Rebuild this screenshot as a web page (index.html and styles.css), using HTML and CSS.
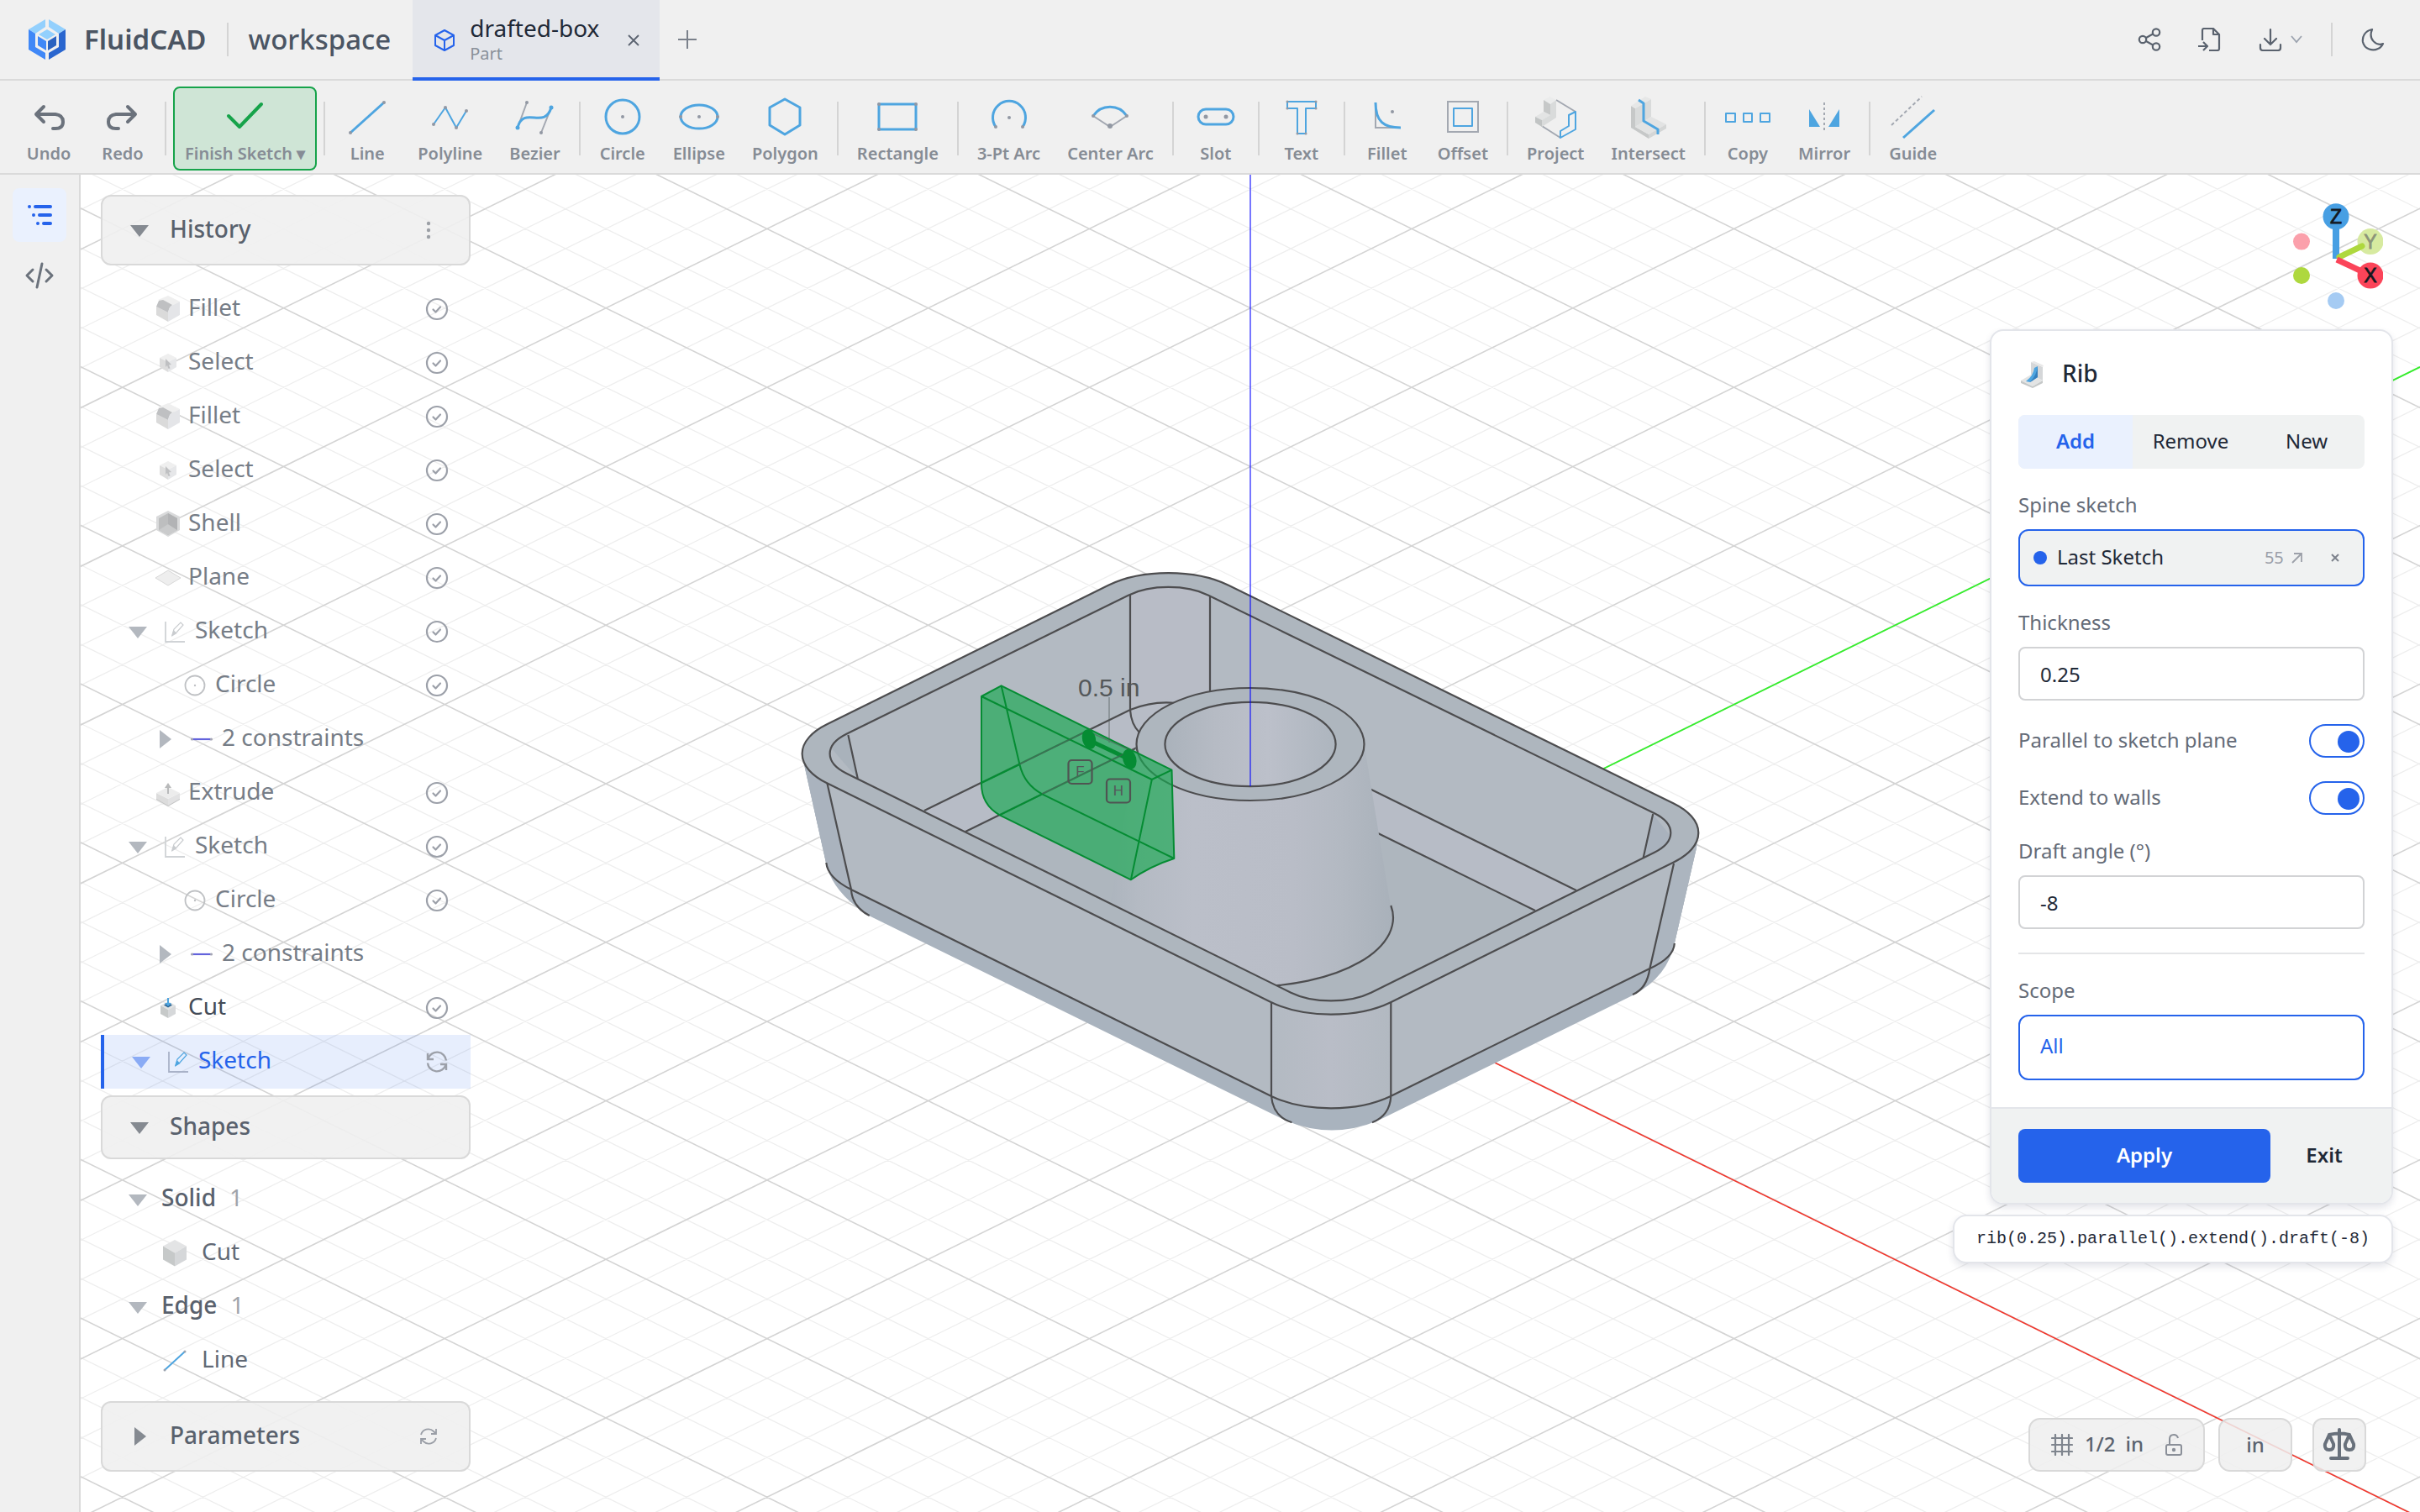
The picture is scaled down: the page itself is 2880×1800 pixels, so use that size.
FILE: index.html
```html
<!DOCTYPE html>
<html lang="en">
<head>
<meta charset="utf-8">
<title>FluidCAD – drafted-box</title>
<link rel="stylesheet" href="styles.css">
</head>
<body>
<svg class="defs" aria-hidden="true">
  <symbol id="i-check" viewBox="0 0 28 28"><circle cx="14" cy="14" r="12" fill="none" stroke="#9ca0a9" stroke-width="2.2"/><path d="M9.500 14.500l3 3 5.500-6" fill="none" stroke="#9ca0a9" stroke-width="2.2" stroke-linecap="round" stroke-linejoin="round"/></symbol>
  <symbol id="i-down" viewBox="0 0 24 24"><path d="M1 6h22L12 20z" fill="currentColor"/></symbol>
  <symbol id="i-right" viewBox="0 0 24 24"><path d="M6 1v22L20 12z" fill="currentColor"/></symbol>
  <symbol id="i-fillet" viewBox="0 0 32 32"><path d="M16 0l14 7-12 6L4 5z" fill="#efefef"/><path d="M2 13v10l14 8V20z" fill="#dadada"/><path d="M2 13l3-7 5-1 11 6-3 3-2 6z" fill="#bfc0c2"/><path d="M16 31V20q1-7 6-9l8-4v16z" fill="#e4e5e8"/></symbol>
  <symbol id="i-select" viewBox="0 0 32 32"><path d="M16 5l10 5-10 5-10-5z" fill="#efefef"/><path d="M6 10v11l10 6V15z" fill="#dddddd"/><path d="M26 10v11l-10 6V15z" fill="#e6e7e9"/><path d="M13 11l7 7-3 .5 1.500 4-2 .5-1.500-4-2 2z" fill="#bfc0c2"/></symbol>
  <symbol id="i-shell" viewBox="0 0 32 32"><path d="M16 0l14 7v16l-14 8-14-8V7z" fill="#d9dadb"/><path d="M16 3l11 6v14l-11 6-11-6V9z" fill="#bdbebf"/><path d="M16 16l11 7-11 6-11-6z" fill="#cacbcc"/><path d="M16 3l11 6v14l-11-7z" fill="#b2b3b5"/></symbol>
  <symbol id="i-plane" viewBox="0 0 32 32"><path d="M16 7l15 9-15 9L1 16z" fill="#eeeeee" stroke="#d8d8d8"/></symbol>
  <symbol id="i-sketch" viewBox="0 0 32 32"><path d="M5 4v24h23" fill="none" stroke="var(--axis,#d0d3d6)" stroke-width="1.800"/><path d="M13 20l2-7 8-8 3 3-8 9z" fill="none" stroke="var(--pen,#c9cccf)" stroke-width="1.200"/><path d="M12 22l2.500-8 4 4z" fill="var(--pen,#c9cccf)"/></symbol>
  <symbol id="i-circle" viewBox="0 0 32 32"><circle cx="16" cy="16" r="11.500" fill="none" stroke="#bfc1c4" stroke-width="1.800"/><circle cx="16" cy="16" r="1.200" fill="#bfc1c4"/></symbol>
  <symbol id="i-constraint" viewBox="0 0 32 32"><path d="M5 16h22" stroke="#6363dc" stroke-width="2.200"/><circle cx="4.500" cy="16" r="1.600" fill="#a3a4b4"/><circle cx="27.500" cy="16" r="1.600" fill="#a3a4b4"/></symbol>
  <symbol id="i-extrude" viewBox="0 0 32 32"><path d="M2 21l14 8 14-8v3l-14 8-14-8z" fill="#bfc0c0"/><path d="M2 16l14 7v8L2 23z" fill="#dcdcdc"/><path d="M30 16l-14 7v8l14-8z" fill="#e2e2e3"/><path d="M16 9l14 7-14 7-14-7z" fill="#ececec"/><path d="M16 4l-4 6h3v7h2v-7h3z" fill="#b9babb"/></symbol>
  <symbol id="i-cut" viewBox="0 0 32 32"><path d="M16 8l9 5-9 5-9-5z" fill="#e0e2e2"/><path d="M7 13v10l9 5V18z" fill="#c6c9c9"/><path d="M25 13v10l-9 5V18z" fill="#d6d8da"/><path d="M11 12.500l5-3 5 3-5 3z" fill="#2c6595"/><path d="M15 4h2v6h3l-4 4-4-4h3z" fill="#4ea5e0"/></symbol>
  <symbol id="i-cube" viewBox="0 0 32 32"><path d="M16 0l14 7.500-14 8L2 7.500z" fill="#e3e4e5"/><path d="M2 7.500v16l14 8v-16z" fill="#c6c9c9"/><path d="M30 7.500v16l-14 8v-16z" fill="#d5d7d9"/></symbol>
  <symbol id="i-line" viewBox="0 0 32 32"><path d="M4 27L28 5" stroke="#4ea5e0" stroke-width="2"/><circle cx="4" cy="27" r="1.500" fill="#9ca3af"/><circle cx="28" cy="5" r="1.500" fill="#9ca3af"/></symbol>
  <symbol id="i-sync" viewBox="0 0 28 28"><path d="M3 4v7h7M25 24v-7h-7M3.500 10.500a11 11 0 0 1 21.500 2M24.500 17.500a11 11 0 0 1-21.500-2" fill="none" stroke="currentColor" stroke-width="2.400"/></symbol>
  <symbol id="i-refresh" viewBox="0 0 24 24"><path d="M21 3v6h-6M3 21v-6h6M3 10a9 9 0 0 1 15-4l3 3M21 14a9 9 0 0 1-15 4l-3-3" fill="none" stroke="currentColor" stroke-width="1.800"/></symbol>
</svg>

<div class="app">
  <header class="topbar">
    <svg class="logo" viewBox="0 0 44 48"><path d="M20 0v9L8 17l-8-5z" fill="#93d0fd"/><path d="M24 0v9l12 8 8-5z" fill="#93d0fd"/><path d="M0 12l8 5v16l12 7v8L0 36z" fill="#4088f7"/><path d="M44 12l-8 5v16l-12 7v8l20-12z" fill="#2a66cf"/><path d="M22 12l10 6-10 6-10-6z" fill="#93d0fd"/><path d="M11 20l10 6v11l-10-6z" fill="#4088f7"/><path d="M33 20l-10 6v11l10-6z" fill="#2a62c0"/></svg>
    <strong class="brand">FluidCAD</strong>
    <span class="vline"></span>
    <span class="workspace">workspace</span>
    <div class="tab">
      <svg class="tab-cube" viewBox="0 0 24 26" fill="none" stroke="#2563eb" stroke-width="2" stroke-linejoin="round"><path d="M12 1l11 6v12l-11 6L1 19V7zM1 7l11 6 11-6M12 13v12"/></svg>
      <div class="tab-text"><span class="tab-name">drafted-box</span><span class="tab-kind">Part</span></div>
      <button class="plain" aria-label="Close tab"><svg width="14" height="14" viewBox="0 0 14 14"><path d="M1 1l12 12M13 1L1 13" stroke="#5b6370" stroke-width="1.800"/></svg></button>
    </div>
    <button class="plain add-tab" aria-label="New tab"><svg width="22" height="22" viewBox="0 0 22 22"><path d="M11 0v22M0 11h22" stroke="#7b818b" stroke-width="2"/></svg></button>
    <div class="top-actions">
      <button class="plain" aria-label="Share"><svg width="28" height="28" viewBox="0 0 28 28" fill="none" stroke="#5a626e" stroke-width="2.200"><circle cx="6" cy="14" r="4.200"/><circle cx="22" cy="5.500" r="4.200"/><circle cx="22" cy="22.500" r="4.200"/><path d="M10 12l8-4.500M10 16l8 4.500"/></svg></button>
      <button class="plain" aria-label="Import"><svg width="28" height="28" viewBox="0 0 28 28" fill="none" stroke="#5a626e" stroke-width="2.200" stroke-linejoin="round"><path d="M5 15V3q0-2 2-2h11l7 7v17q0 2-2 2H13M18 1v7h7M0 22h10M6 17l5 5-5 5"/></svg></button>
      <button class="plain download" aria-label="Download"><svg width="28" height="28" viewBox="0 0 28 28" fill="none" stroke="#5a626e" stroke-width="2.200" stroke-linecap="round"><path d="M14 2v18M7 13l7 7 7-7M2 20v4q0 3 3 3h18q3 0 3-3v-4"/></svg><svg width="14" height="10" viewBox="0 0 14 10"><path d="M1 1l6 7 6-7" fill="none" stroke="#9ca3af" stroke-width="1.800"/></svg></button>
      <span class="vline"></span>
      <button class="plain" aria-label="Dark mode"><svg width="28" height="28" viewBox="0 0 28 28" fill="none" stroke="#5a626e" stroke-width="2.200" stroke-linejoin="round"><path d="M13 2C4 4 1 11 2 17c2 9 12 11 18 8 3-1 5-4 6-6-8 3-18-5-13-17z"/></svg></button>
    </div>
  </header>

  <nav class="toolbar" aria-label="Sketch tools">
    <button class="tool"><svg viewBox="0 0 48 48" fill="none" stroke="#6b727c" stroke-width="4" stroke-linecap="round" stroke-linejoin="round"><path d="M18 12L9 21l9 9M10 21h22q9 1 9 9t-9 8h-3"/></svg>Undo</button>
    <button class="tool"><svg viewBox="0 0 48 48" fill="none" stroke="#6b727c" stroke-width="4" stroke-linecap="round" stroke-linejoin="round"><path d="M30 12l9 9-9 9M38 21H16q-9 1-9 9t9 8h3"/></svg>Redo</button>
    <span class="sep"></span>
    <button class="tool finish"><svg viewBox="0 0 48 48" fill="none" stroke="#16a34a" stroke-width="4"><path d="M4 23l13 13L43 9" stroke-linejoin="round" stroke-linecap="round"/></svg><span>Finish Sketch ▾</span></button>
    <span class="sep"></span>
    <button class="tool"><svg viewBox="0 0 48 48"><path d="M4 43L44 7" class="b3"/><g class="d"><circle cx="4" cy="43" r="2"/><circle cx="44" cy="7" r="2"/></g></svg>Line</button>
    <button class="tool"><svg viewBox="0 0 48 48"><path d="M4 33l14-20 13 24 12-20" class="b2"/><g class="d"><circle cx="4" cy="33" r="2"/><circle cx="18" cy="13" r="2"/><circle cx="31" cy="37" r="2"/><circle cx="43" cy="17" r="2"/></g></svg>Polyline</button>
    <button class="tool"><svg viewBox="0 0 48 48"><path d="M3 37L14 7M43 13L31 43" class="g"/><path d="M3 37C10 10 35 40 43 13" class="b3"/><g class="d"><circle cx="14" cy="7" r="2"/><circle cx="31" cy="43" r="2"/></g><circle cx="3" cy="37" r="2.500" fill="#4ea5e0"/><circle cx="43" cy="13" r="2.500" fill="#4ea5e0"/></svg>Bezier</button>
    <span class="sep"></span>
    <button class="tool"><svg viewBox="0 0 48 48"><circle cx="24" cy="24" r="20" class="b3"/><g class="d"><circle cx="24" cy="24" r="2"/></g></svg>Circle</button>
    <button class="tool"><svg viewBox="0 0 48 48"><ellipse cx="24" cy="24" rx="22" ry="14" class="b3"/><g class="d"><circle cx="24" cy="24" r="2"/><circle cx="2" cy="24" r="2"/><circle cx="46" cy="24" r="2"/></g></svg>Ellipse</button>
    <button class="tool"><svg viewBox="0 0 48 48"><path d="M24 3l18 10v21L24 45 6 34V13z" class="b3"/></svg>Polygon</button>
    <span class="sep"></span>
    <button class="tool"><svg viewBox="0 0 48 48"><path d="M2 9h44v30H2z" class="b3"/><g class="d"><circle cx="2" cy="9" r="2"/><circle cx="46" cy="9" r="2"/><circle cx="2" cy="39" r="2"/><circle cx="46" cy="39" r="2"/></g></svg>Rectangle</button>
    <span class="sep"></span>
    <button class="tool"><svg viewBox="0 0 48 48"><path d="M8 36a19.500 19.500 0 1 1 32 0" class="b3"/><g class="d"><circle cx="8" cy="36" r="2"/><circle cx="40" cy="36" r="2"/><circle cx="24" cy="25" r="2"/></g></svg>3-Pt Arc</button>
    <button class="tool"><svg viewBox="0 0 48 48"><path d="M4 23l20 13 20-13" class="g"/><path d="M4 23a24 24 0 0 1 40 0" class="b3"/><g class="d"><circle cx="4" cy="23" r="2"/><circle cx="44" cy="23" r="2"/><circle cx="24" cy="35" r="3"/></g></svg>Center Arc</button>
    <span class="sep"></span>
    <button class="tool"><svg viewBox="0 0 48 48"><rect x="3" y="15" width="42" height="18" rx="9" class="b3"/><g class="d"><circle cx="12" cy="24" r="2.500"/><circle cx="36" cy="24" r="2.500"/></g></svg>Slot</button>
    <span class="sep"></span>
    <button class="tool"><svg viewBox="0 0 48 48"><path d="M7 6h34v8H29v30H19V14H7z" class="b2"/><g class="d"><circle cx="7" cy="6" r="1.500"/><circle cx="41" cy="6" r="1.500"/><circle cx="7" cy="14" r="1.500"/><circle cx="41" cy="14" r="1.500"/><circle cx="19" cy="44" r="1.500"/><circle cx="29" cy="44" r="1.500"/></g></svg>Text</button>
    <span class="sep"></span>
    <button class="tool"><svg viewBox="0 0 48 48"><path d="M10 7v30h30" class="g"/><path d="M10 7C10 30 20 37 40 37" class="b3"/><g class="d"><circle cx="30" cy="18" r="2"/></g></svg>Fillet</button>
    <button class="tool"><svg viewBox="0 0 48 48"><path d="M6 6h36v36H6z" class="g"/><path d="M13 14h22v21H13z" class="b2"/></svg>Offset</button>
    <span class="sep"></span>
    <button class="tool"><svg viewBox="0 0 48 48"><path d="M25 4l23 14M8 35l22 14" class="g"/><path d="M10 4l7.500-4L25 4l-7 5z" fill="#ebecec"/><path d="M10 4l8 5v13l-8-4z" fill="#c6c8c8"/><path d="M0 24l10-6 8 4-10 6z" fill="#e3e4e4"/><path d="M0 24l8 4v8l-8-5z" fill="#c1c4c4"/><path d="M8 28l10-6V9l7-5v21L8 36z" fill="#d9dbdb"/><path d="M48 18v21L30 49v-8l10-6V22z" class="b2"/></svg>Project</button>
    <button class="tool"><svg viewBox="0 0 48 48"><path d="M3 11l5 3v22l16 9v5L3 37z" fill="#c6c8c8"/><path d="M8 14L27 3v21L8 36z" fill="#d9dbdb"/><path d="M3 11L20 0l7 3L8 14z" fill="#e6e7e7"/><path d="M8 36l19-12 18 9-21 12z" fill="#e2e3e3"/><path d="M24 45l21-12v5L24 50z" fill="#d4d6d6"/><path d="M12 4l6 4v21l17 10v6" class="b3"/></svg>Intersect</button>
    <span class="sep"></span>
    <button class="tool"><svg viewBox="0 0 48 48"><path d="M-2 20h11v10H-2zM19 20h10v10H19zM39 20h11v10H39z" class="b2"/></svg>Copy</button>
    <button class="tool"><svg viewBox="0 0 48 48"><path d="M6 15v21h13zM42 15v21H29z" fill="#4ea5e0"/><path d="M24 7v36" class="g" stroke-dasharray="3 3"/></svg>Mirror</button>
    <span class="sep"></span>
    <button class="tool"><svg viewBox="0 0 48 48"><path d="M-2 34L34 0" class="g" stroke-dasharray="4 3"/><path d="M12 49l37-33" class="b3"/></svg>Guide</button>
  </nav>

  <main class="workarea">
    <nav class="rail" aria-label="Panels">
      <button class="rail-btn active" aria-label="Feature tree"><svg width="32" height="32" viewBox="0 0 32 32" stroke="#2563eb" stroke-width="4" stroke-linecap="round"><path d="M4 6h0M11 6h18M9 16h0M16 16h13M14 26h0M21 26h8"/></svg></button>
      <button class="rail-btn" aria-label="Code"><svg width="36" height="32" viewBox="0 0 36 32" fill="none" stroke="#6b727c" stroke-width="3" stroke-linecap="round" stroke-linejoin="round"><path d="M10 9l-7 7 7 7M26 9l7 7-7 7M21 2l-6 28"/></svg></button>
    </nav>

    <section class="viewport">
      <svg class="scene" viewBox="96 208 2784 1592" preserveAspectRatio="xMidYMid slice" role="img" aria-label="3D view of the drafted box">
        <defs>
          <clipPath id="cavity"><path id="inner" d="M1342.800 708.700A67.400 33.200 0 0 1 1438.200 708.700L1968.500 968A67.400 33.200 0 0 1 1968.500 1015L1631.700 1181.700A67.400 33.200 0 0 1 1536.300 1181.700L1007.400 920.800A67.400 33.200 0 0 1 1007.400 873.800Z"/></clipPath>
          <linearGradient id="cone" x1="1320" x2="1657" y1="0" y2="0" gradientUnits="userSpaceOnUse"><stop offset="0" stop-color="#acb4bd"/><stop offset=".1" stop-color="#b4bac3"/><stop offset=".3" stop-color="#bbbfc9"/><stop offset=".65" stop-color="#b9bdc7"/><stop offset=".82" stop-color="#b3b9c2"/><stop offset="1" stop-color="#a9b1ba"/></linearGradient>
          <linearGradient id="bore" x1="1386" x2="1590" y1="0" y2="0" gradientUnits="userSpaceOnUse"><stop offset="0" stop-color="#aab2bb"/><stop offset=".3" stop-color="#b6bbc4"/><stop offset=".6" stop-color="#bcc0ca"/><stop offset="1" stop-color="#adb5be"/></linearGradient>
          <linearGradient id="front" x1="1513" x2="1655" y1="0" y2="0" gradientUnits="userSpaceOnUse"><stop offset="0" stop-color="#b3bac2"/><stop offset=".5" stop-color="#b9bdc7"/><stop offset="1" stop-color="#b2b9c1"/></linearGradient>
        </defs>
        <g id="grid" fill="none"></g>
        <path d="M1488 1122L2880 1806.900" stroke="#f3352b" stroke-width="1.600"/>
        <path d="M1488 1122L2880 436.900" stroke="#35ef2c" stroke-width="1.800"/>

        <path d="M954.400 897L958 915L983 1027Q990 1062 1034 1090L1530 1334Q1585 1357 1640 1334L1943 1185Q1985 1163 1993 1122L2019 1009L2021.500 990Z" fill="#a9b3be"/>
        <path d="M983 1027Q985 1045 1013 1059L1513 1305A101 49.500 0 0 0 1655 1305L1963.400 1153Q1992 1140 1992.800 1123L2019 1009L1992 1000L1500 900L956 905Z" fill="#b3bac2"/>
        <path d="M956 905L983 1027Q985 1045 1013 1059L984.500 932z" fill="#aab3be"/>
        <path d="M2019 1009L1992.800 1123Q1992 1140 1963.400 1153L1992 1027z" fill="#acb5bf"/>
        <path d="M1513 1192V1305A101 49.500 0 0 0 1655 1305V1192z" fill="url(#front)"/>
        <path d="M1319.500 696.500A100.700 49.500 0 0 1 1461.500 696.500L1991.800 956.500A100.700 49.500 0 0 1 1991.800 1026.500L1655 1193.200A100.700 49.500 0 0 1 1513 1193.200L984.100 932.300A100.700 49.500 0 0 1 984.100 862.300Z" fill="#aeb6be" stroke="#4d4d4f" stroke-width="2.200"/>

        <g clip-path="url(#cavity)">
          <use href="#inner" fill="#b3bac2"/>
          <path d="M1345 700H1440V846L1345 846z" fill="#b8bcc6"/>
          <path d="M1000 1014L1345 845Q1395 820 1440 845L1876 1060L1700 1200H1400z" fill="#b7bcc6"/>
          <path d="M1050 1039L1353 890L1500 923L1642 993L1827 1084L1584 1260z" fill="#aeb6be"/>
          <path d="M980 880L1009.400 875L1020.800 927z" fill="#a9b2bb"/>
          <path d="M1967 969L1955.700 1021L2000 1010z" fill="#a9b2bd"/>
          <path d="M1345 705V845Q1346 862 1356 872M1440 705V850M1100 965L1345 845Q1372 834 1400 837M1149 990L1353 890M1009.400 875L1020.800 927M1967.200 969L1955.700 1021M1630 939L1876 1060M1640 992L1827 1084" fill="none" stroke="#4d4d4f" stroke-width="2.200"/>
          <path d="M1352.500 886L1321 1079A169 83 0 1 0 1655 1079L1623.500 886z" fill="url(#cone)"/>
          <path d="M1655.300 1078A169 82 0 0 1 1488 1174.500" fill="none" stroke="#4d4d4f" stroke-width="2.200"/>
        </g>
        <use href="#inner" fill="none" stroke="#4d4d4f" stroke-width="2.200"/>
        <g stroke="#4d4d4f" stroke-width="2.200">
          <ellipse cx="1488" cy="886" rx="135.500" ry="67" fill="#aeb6be"/>
          <ellipse cx="1488" cy="886" rx="101.600" ry="50.200" fill="url(#bore)"/>
        </g>
        <path d="M984.500 932.700L1013 1059Q1014 1079 1034.700 1090M983.300 1027Q985 1045 1013 1059L1513 1305A101 49.500 0 0 0 1655 1305L1963.400 1153Q1992 1140 1992.800 1123M1992 1028L1963.400 1153Q1960 1177 1943 1184M1513 1193V1305Q1515 1329 1537.400 1336.300M1655.300 1193V1305Q1654 1328 1633 1336.300" fill="none" stroke="#4d4d4f" stroke-width="2.200"/>
        <path d="M1488 208V936" stroke="#0000ff" stroke-opacity=".6" stroke-width="1.800"/>

        <g stroke="#058c33" stroke-width="2" stroke-linejoin="round">
          <path d="M1168 829L1191.600 816.300L1394.500 916.700L1397.300 1022Q1369 1031 1345.900 1047.300L1189.700 970.300Q1168 958 1168 933.300z" fill="#17a950" fill-opacity=".66"/>
          <path d="M1168 829L1370.800 928L1394.500 916.700M1370.800 928L1345.900 1047.300M1191.600 816.300L1213.400 910Q1219 934 1240.300 945.300L1397.300 1022M1168 932L1213.400 910M1189.700 970.300L1240.300 945.300" fill="none"/>
          <path d="M1300 883L1342 903" stroke-width="5"/>
        </g>
        <path d="M1213 910L1300 867M1240 945L1353 890M1320 830V884M1300 873L1345 893" fill="none" stroke="#505a57" stroke-opacity=".5" stroke-width="1.500"/>
        <g fill="#058c33"><ellipse cx="1296" cy="880" rx="8" ry="12" transform="rotate(-15 1296 880)"/><ellipse cx="1344.300" cy="903.700" rx="8" ry="12" transform="rotate(-15 1344.300 903.700)"/></g>
        <g fill="none" stroke="#4f5452" stroke-width="2.200"><rect x="1271.500" y="905" width="28" height="28" rx="4"/><rect x="1317" y="927.500" width="28" height="28" rx="4"/></g>
        <g class="scene-text"><text x="1285.500" y="924" font-size="17" text-anchor="middle">F</text><text x="1331" y="947" font-size="17" text-anchor="middle">H</text><text x="1283" y="829" font-size="30">0.5 in</text></g>
      </svg>

      <aside class="sidebar">
        <div class="head"><button class="plain head-toggle"><svg class="chev"><use href="#i-down"/></svg><span>History</span></button><button class="plain" aria-label="History menu"><svg width="24" height="24" viewBox="0 0 24 24" fill="#9ca0a6"><circle cx="12" cy="4" r="2.200"/><circle cx="12" cy="12" r="2.200"/><circle cx="12" cy="20" r="2.200"/></svg></button></div>
        <ul class="tree history">
          <li class="row l2"><svg class="ico"><use href="#i-fillet"/></svg><span>Fillet</span><svg class="state"><use href="#i-check"/></svg></li>
          <li class="row l2"><svg class="ico"><use href="#i-select"/></svg><span>Select</span><svg class="state"><use href="#i-check"/></svg></li>
          <li class="row l2"><svg class="ico"><use href="#i-fillet"/></svg><span>Fillet</span><svg class="state"><use href="#i-check"/></svg></li>
          <li class="row l2"><svg class="ico"><use href="#i-select"/></svg><span>Select</span><svg class="state"><use href="#i-check"/></svg></li>
          <li class="row l2"><svg class="ico"><use href="#i-shell"/></svg><span>Shell</span><svg class="state"><use href="#i-check"/></svg></li>
          <li class="row l2"><svg class="ico"><use href="#i-plane"/></svg><span>Plane</span><svg class="state"><use href="#i-check"/></svg></li>
          <li class="row l1"><svg class="chev"><use href="#i-down"/></svg><svg class="ico"><use href="#i-sketch"/></svg><span>Sketch</span><svg class="state"><use href="#i-check"/></svg></li>
          <li class="row l3"><svg class="ico"><use href="#i-circle"/></svg><span>Circle</span><svg class="state"><use href="#i-check"/></svg></li>
          <li class="row l2"><svg class="chev"><use href="#i-right"/></svg><svg class="ico"><use href="#i-constraint"/></svg><span>2 constraints</span></li>
          <li class="row l2"><svg class="ico"><use href="#i-extrude"/></svg><span>Extrude</span><svg class="state"><use href="#i-check"/></svg></li>
          <li class="row l1"><svg class="chev"><use href="#i-down"/></svg><svg class="ico"><use href="#i-sketch"/></svg><span>Sketch</span><svg class="state"><use href="#i-check"/></svg></li>
          <li class="row l3"><svg class="ico"><use href="#i-circle"/></svg><span>Circle</span><svg class="state"><use href="#i-check"/></svg></li>
          <li class="row l2"><svg class="chev"><use href="#i-right"/></svg><svg class="ico"><use href="#i-constraint"/></svg><span>2 constraints</span></li>
          <li class="row l2 dark"><svg class="ico"><use href="#i-cut"/></svg><span>Cut</span><svg class="state"><use href="#i-check"/></svg></li>
          <li class="row l1 current"><svg class="chev"><use href="#i-down"/></svg><svg class="ico"><use href="#i-sketch"/></svg><span>Sketch</span><svg class="state"><use href="#i-sync"/></svg></li>
        </ul>
        <div class="head shapes-head"><button class="plain head-toggle"><svg class="chev"><use href="#i-down"/></svg><span>Shapes</span></button></div>
        <ul class="tree shapes">
          <li class="row l1 group"><svg class="chev"><use href="#i-down"/></svg><span>Solid</span><span class="count">1</span></li>
          <li class="row shape"><svg class="ico"><use href="#i-cube"/></svg><span>Cut</span></li>
          <li class="row l1 group"><svg class="chev"><use href="#i-down"/></svg><span>Edge</span><span class="count">1</span></li>
          <li class="row shape"><svg class="ico"><use href="#i-line"/></svg><span>Line</span></li>
        </ul>
        <div class="head"><button class="plain head-toggle"><svg class="chev"><use href="#i-right"/></svg><span>Parameters</span></button><button class="plain" aria-label="Refresh parameters"><svg class="refresh" width="24" height="24"><use href="#i-refresh"/></svg></button></div>
      </aside>

      <div class="right">
        <svg class="gizmo" viewBox="2724 232 112 160" role="img" aria-label="View orientation">
          <circle cx="2739" cy="287.600" r="10" fill="#fba0ab"/><circle cx="2780" cy="358" r="10" fill="#a5cbf3"/>
          <circle cx="2821" cy="287.600" r="15.500" fill="#d7eaa0"/>
          <path d="M2780 308V258" stroke="#479fe3" stroke-width="8"/>
          <path d="M2784 306L2811 293" stroke="#aed83e" stroke-width="7" stroke-linecap="round"/>
          <path d="M2781 309L2821 328" stroke="#fb4459" stroke-width="7"/>
          <circle cx="2739" cy="328" r="10" fill="#aed83e"/><circle cx="2780" cy="257.800" r="15.500" fill="#479fe3"/><circle cx="2821" cy="328" r="15.500" fill="#fb4459"/>
          <g class="gizmo-text"><text x="2780" y="266">Z</text><text x="2821" y="296" class="dim">Y</text><text x="2821" y="336">X</text></g>
        </svg>

        <form class="panel">
          <div class="panel-body">
            <h2><svg width="32" height="32" viewBox="0 0 32 32"><path d="M15 1l14 6v16l-14-7z" fill="#d5d7d9"/><path d="M15 1l4-1 11 5-1 2z" fill="#e8e8e8"/><path d="M15 16l14 7-12 7L3 23z" fill="#e3e4e4"/><path d="M3 23l14 7 12-7v3l-12 6L3 26z" fill="#c5c8c8"/><path d="M9 24Q18 17 19 8l4-2v13l-9 6z" fill="#4ea5e0"/><path d="M23 6v13l-9 6q8-9 9-19z" fill="#357fbd"/></svg><span>Rib</span></h2>
            <div class="segments"><button type="button" class="on">Add</button><button type="button">Remove</button><button type="button">New</button></div>
            <span class="label">Spine sketch</span>
            <div class="pick"><i class="dot"></i><span>Last Sketch</span><a href="#line-55">55 <svg width="14" height="14" viewBox="0 0 14 14"><path d="M1 13L12 2M3 2h9v10" fill="none" stroke="#9ca0a9" stroke-width="1.800"/></svg></a><button type="button" class="plain" aria-label="Clear"><svg width="10" height="10" viewBox="0 0 10 10"><path d="M1 1l8 8M9 1L1 9" stroke="#7d828c" stroke-width="2"/></svg></button></div>
            <label class="label" for="thick">Thickness</label>
            <input class="field" id="thick" type="text" value="0.25">
            <div class="switch"><label for="par">Parallel to sketch plane</label><input id="par" type="checkbox" checked></div>
            <div class="switch"><label for="ext">Extend to walls</label><input id="ext" type="checkbox" checked></div>
            <label class="label" for="draft">Draft angle (°)</label>
            <input class="field" id="draft" type="text" value="-8">
            <hr>
            <label class="label" for="scope">Scope</label>
            <button type="button" class="scope" id="scope">All</button>
          </div>
          <div class="panel-foot"><button type="button" class="apply">Apply</button><button type="button" class="exit">Exit</button></div>
        </form>
        <code class="snippet">rib(0.25).parallel().extend().draft(-8)</code>

        <div class="status">
          <button class="chip"><svg width="26" height="26" viewBox="0 0 26 26" stroke="#7f858e" stroke-width="2.200" stroke-linecap="round"><path d="M5 1v24M13 1v24M21 1v24M1 5h24M1 13h24M1 21h24"/></svg><span class="grid-size"><span>1/2</span><span>in</span></span><svg class="lock" width="20" height="26" viewBox="0 0 20 26" fill="none" stroke="#8b9099" stroke-width="2"><rect x="1" y="13" width="18" height="12" rx="2"/><path d="M5 13V6q0-5 5-5 4 0 5 4"/><circle cx="10" cy="19" r="1.200" fill="#8b9099"/></svg></button>
          <button class="chip unit"><span>in</span></button>
          <button class="chip square" aria-label="Measure"><svg width="40" height="40" viewBox="0 0 40 40" fill="none" stroke="#68707b" stroke-width="4" stroke-linecap="round" stroke-linejoin="round"><path d="M20 2v34M10 36h20M8 8q12-3 24 0M8 8L3 19q-1 7 5 7t5-7zM32 8l-5 11q-1 7 5 7t5-7z"/></svg></button>
        </div>
      </div>
    </section>
  </main>
</div>
<script src="grid.js"></script>
</body>
</html>
```
FILE: styles.css
```css
* { box-sizing: border-box; }
body { margin: 0; font-family: "Noto Sans", "Open Sans", sans-serif; font-size: 24px; color: #1f2937; background: #fff; }
button, input { font: inherit; color: inherit; }
button { cursor: pointer; }
.defs { position: absolute; width: 0; height: 0; }
.plain { display: flex; align-items: center; padding: 0; border: 0; background: none; }
.app { display: flex; flex-direction: column; height: 100vh; min-height: 1000px; }

/* Title bar */
.topbar { display: flex; align-items: center; height: 96px; flex: none; padding-left: 34px; background: #f0f0f0; border-bottom: 2px solid #dadada; color: #4b5563; }
.logo { width: 44px; height: 48px; margin-right: 22px; }
.brand { font-size: 33px; font-weight: 600; line-height: 40px; }
.vline { width: 2px; height: 40px; margin: 0 24px; background: #d4d4d4; }
.workspace { font-size: 33px; font-weight: 500; line-height: 40px; }
.tab { display: flex; align-items: center; align-self: stretch; width: 294px; margin: 0 22px -2px 26px; padding: 4px 24px 0 26px; background: #e4e6eb; border-bottom: 4px solid #2563eb; }
.tab-cube { width: 24px; height: 26px; margin-right: 18px; }
.tab-text { display: flex; flex-direction: column; flex: 1; }
.tab-name { font-size: 28px; line-height: 32px; color: #1f2937; }
.tab-kind { font-size: 20px; line-height: 30px; color: #8a9099; }
.top-actions { display: flex; align-items: center; margin-left: auto; padding-right: 42px; gap: 44px; }
.top-actions .vline { margin: 0 -10px; }
.download { gap: 10px; }

/* Tools */
.toolbar { display: flex; align-items: center; height: 112px; flex: none; gap: 4px; padding: 4px 16px 0; background: #f0f0f0; border-bottom: 2px solid #dadada; overflow: hidden; }
.tool { display: flex; flex-direction: column; align-items: center; flex: none; gap: 6px; min-width: 84px; height: 100px; padding: 10px 12px 0; border: 2px solid transparent; border-radius: 8px; background: none; font-size: 20px; font-weight: 600; line-height: 28px; color: #868c95; }
.tool svg { width: 48px; height: 48px; overflow: visible; }
.finish { background: #cfe5d6; border-color: #16a34a; }
.sep { width: 2px; height: 64px; flex: none; margin: 0 4px; background: #d4d4d4; }
.b2, .b3 { fill: none; stroke: #4ea5e0; stroke-width: 2; stroke-linejoin: round; }
.b3 { stroke-width: 3; }
.g { fill: none; stroke: #a3a8b1; stroke-width: 2; }
.d { fill: #9298a3; }

.workarea { display: flex; flex: 1; min-height: 0; }
.rail { display: flex; flex-direction: column; align-items: center; gap: 8px; width: 96px; flex: none; padding-top: 16px; background: #f0f0f0; border-right: 2px solid #dadada; }
.rail-btn { display: flex; align-items: center; justify-content: center; width: 64px; height: 64px; padding: 0; border: 0; border-radius: 8px; background: none; }
.rail-btn.active { background: #eaf1fe; }

.viewport { position: relative; display: flex; justify-content: space-between; flex: 1; min-width: 0; padding: 24px 32px 48px 24px; overflow: hidden; }
.scene { position: absolute; inset: 0; width: 100%; height: 100%; }
.scene-text { font-family: "Liberation Sans", sans-serif; fill: #54585a; }

/* Feature tree */
.sidebar { position: relative; display: flex; flex-direction: column; width: 440px; min-height: 0; }
.head { display: flex; align-items: center; justify-content: space-between; height: 84px; flex: none; padding: 0 36px 0 32px; border: 2px solid #d9d9d9; border-radius: 12px; background: rgba(239, 239, 239, .9); }
.shapes-head { height: 76px; margin-top: 8px; }
.head-toggle { gap: 24px; font-size: 28px; font-weight: 500; color: #59616d; }
.head-toggle span, .panel h2 span { padding-bottom: 4px; }
.row span { padding-bottom: 6px; }
.head .chev { color: #858a91; }
.refresh { color: #9a9ea6; }
.tree { margin: 0; padding: 0; list-style: none; }
.history { flex: 1 1 0; min-height: 0; padding-top: 20px; overflow: hidden; }
.shapes { flex: none; padding: 16px 0; }
.row { display: flex; align-items: center; gap: 8px; height: 64px; padding-right: 26px; font-size: 28px; color: #767d87; }
.l1 { padding-left: 32px; }
.l2 { padding-left: 64px; }
.l3 { padding-left: 96px; }
.shape { gap: 16px; padding-left: 72px; color: #616975; }
.dark { color: #434b57; }
.group { font-weight: 500; color: #59616d; }
.count { margin-left: 8px; font-weight: 400; color: #a0a4ab; }
.chev { width: 24px; height: 24px; flex: none; color: #b3b8bf; }
.row .chev { margin-right: 8px; }
.ico { width: 32px; height: 32px; flex: none; }
.state { width: 28px; height: 28px; margin-left: auto; color: #9ca0a9; }
.current { --axis: #a9b2c8; --pen: #4ea5e0; border-left: 4px solid #2563eb; background: rgba(37, 99, 235, .11); color: #2563eb; }
.current .chev { color: #8aabf5; }

/* Right column */
.right { position: relative; display: flex; flex-direction: column; align-items: flex-end; }
.gizmo { width: 112px; height: 160px; flex: none; margin-right: 12px; }
.gizmo-text { font-family: "Liberation Sans", sans-serif; font-size: 23px; text-anchor: middle; fill: #14181f; stroke: #14181f; stroke-width: .8px; }
.gizmo-text .dim { fill: #8c9479; stroke: #8c9479; }
.panel { width: 480px; flex: none; border: 2px solid #e3e5ea; border-radius: 16px; background: #fff; box-shadow: 0 4px 8px rgba(30, 41, 80, .12); overflow: hidden; }
.panel-body { display: flex; flex-direction: column; padding: 28px 32px 32px; }
.panel h2 { display: flex; align-items: center; gap: 20px; height: 48px; margin: 0 0 24px; font-size: 28px; font-weight: 500; }
.segments { display: grid; grid-template-columns: 136px 1fr 1fr; height: 64px; border-radius: 8px; background: #f0f2f2; overflow: hidden; }
.segments button { padding: 0 0 4px; border: 0; background: none; }
.segments .on { background: #eaf1fe; color: #2563eb; font-weight: 600; }
.label { display: block; margin: 25px 0 11px; line-height: 36px; color: #646b77; }
.pick { display: flex; align-items: center; height: 68px; padding: 0 28px 0 16px; border: 2px solid #2563eb; border-radius: 12px; background: #f0f2f2; }
.pick span { flex: 1; padding-bottom: 4px; }
.dot { width: 16px; height: 16px; margin-right: 12px; border-radius: 50%; background: #2563eb; }
.pick a { margin-right: 33px; padding-bottom: 2px; font-size: 20px; color: #9ca0a9; text-decoration: none; }
.pick a svg { margin-left: 4px; }
.field { width: 100%; height: 64px; padding: 0 24px; border: 2px solid #d2d3d5; border-radius: 8px; background: #fff; }
.switch { display: flex; align-items: center; justify-content: space-between; height: 40px; margin-top: 28px; color: #646b77; }
.switch label { padding-bottom: 4px; }
.switch input { appearance: none; width: 66px; height: 40px; margin: 0; padding: 6px; border: 2px solid #2563eb; border-radius: 20px; background: #fff; }
.switch input::before { content: ""; display: block; width: 26px; height: 26px; border-radius: 50%; background: #2563eb; }
.switch input:checked::before { margin-left: auto; margin-right: -2px; }
.panel hr { width: 100%; margin: 28px 0 0; border: 0; border-top: 2px solid #e4e5e7; }
.scope { height: 78px; padding: 0 24px 6px; border: 2px solid #2563eb; border-radius: 12px; background: #fff; color: #2563eb; text-align: left; }
.panel-foot { display: flex; gap: 16px; padding: 24px 32px; border-top: 2px solid #e3e5ea; background: #f0f2f2; font-weight: 600; }
.apply { flex: 1; height: 64px; padding: 0 0 4px; border: 0; border-radius: 8px; background: #2563eb; color: #fff; }
.exit { width: 96px; padding: 0 0 4px; border: 0; background: none; }
.snippet { margin-top: 12px; padding: 0 26px; border: 2px solid #e3e5ea; border-radius: 16px; background: #fff; box-shadow: 0 4px 8px rgba(30, 41, 80, .12); font: 20px/54px "Liberation Mono", monospace; color: #1f2937; }
.status { display: flex; margin: auto 32px 0 0; }
.chip { display: flex; align-items: center; justify-content: center; gap: 14px; width: 210px; height: 64px; padding: 0; border: 2px solid #d9d9d9; border-radius: 14px; background: rgba(239, 239, 239, .85); color: #5b636f; font-weight: 500; }
.chip span { padding-bottom: 2px; }
.grid-size { display: flex; gap: 12px; }
.chip .lock { margin-left: 12px; }
.unit { width: 88px; margin: 0 24px 0 16px; }
.square { width: 64px; border-radius: 12px; }
```
FILE: grid.js
```js
// Isometric ground grid: every fourth line is a major line.
const ORIGIN = { x: 1488.2, y: 1121.7 };
const STEP = 188.74 / 4;
const SLOPE = 94.37 / 191.8;
const LEFT = -600;
const RIGHT = 3600;

let minor = '';
let major = '';
for (let i = -70; i <= 70; i++) {
  for (const dir of [-1, 1]) {
    const y = ORIGIN.y + i * STEP;
    const y1 = y + dir * SLOPE * (LEFT - ORIGIN.x);
    const y2 = y + dir * SLOPE * (RIGHT - ORIGIN.x);
    const line = `M${LEFT} ${y1}L${RIGHT} ${y2}`;
    if (i % 4 === 0) major += line;
    else minor += line;
  }
}
document.getElementById('grid').innerHTML =
  `<path d="${minor}" stroke="#eeeeee" stroke-width="1.3"/>` +
  `<path d="${major}" stroke="#d4d4d4" stroke-width="1.6"/>`;
```
